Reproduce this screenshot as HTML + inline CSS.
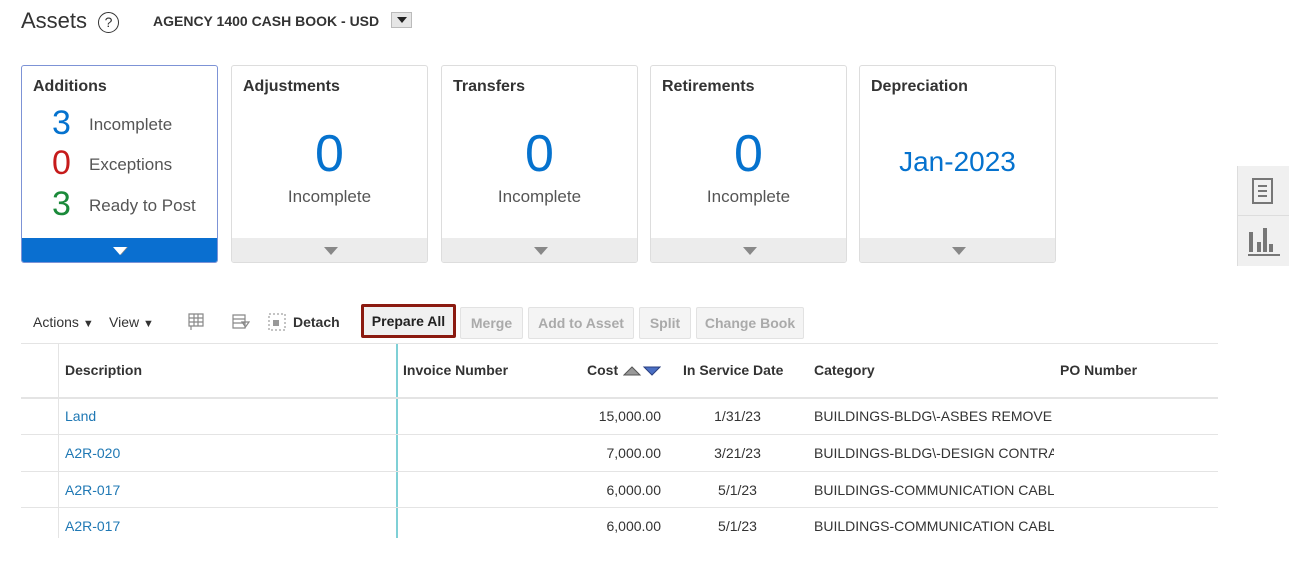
<!DOCTYPE html>
<html><head><meta charset="utf-8"><style>
*{margin:0;padding:0;box-sizing:border-box}
body{width:1289px;height:566px;background:#fff;font-family:"Liberation Sans",Arial,sans-serif;color:#333;position:relative;overflow:hidden}
.a{position:absolute;white-space:nowrap}
.card{position:absolute;top:65px;width:197px;height:198px;border:1px solid #ddd;border-radius:3px;background:#fff;overflow:hidden}
.card .t{position:absolute;left:11px;top:12px;font-size:16px;font-weight:bold;color:#333}
.card .ft{position:absolute;left:0;right:0;bottom:0;height:24px;background:#ececec}
.card .ft:after{content:"";position:absolute;left:92px;top:9px;border-left:7px solid transparent;border-right:7px solid transparent;border-top:8px solid #888}
.big{position:absolute;left:0;right:0;text-align:center;top:58px;font-size:52px;color:#0572ce;line-height:60px}
.sub{position:absolute;left:0;right:0;text-align:center;top:121px;font-size:17px;color:#555}
.btn{position:absolute;top:307px;height:32px;border:1px solid #e2e2e2;border-radius:2px;background:#f4f4f4;color:#aaa;font-size:14px;font-weight:bold;line-height:30px;text-align:center}
.hd{position:absolute;top:362px;font-size:14px;font-weight:bold;color:#333}
.line{position:absolute;left:21px;width:1197px;height:1px;background:#e4e4e4}
.c{position:absolute;font-size:14px;color:#333}
.lnk{color:#1f78b4}
</style></head><body>
<div class="a" style="left:21px;top:8px;font-size:22px;color:#333">Assets</div>
<div class="a" style="left:98px;top:12px;width:21px;height:21px;border:1.5px solid #333;border-radius:50%;font-size:14px;text-align:center;line-height:18px">?</div>
<div class="a" style="left:153px;top:13px;font-size:14px;font-weight:bold;color:#333">AGENCY 1400 CASH BOOK - USD</div>
<div class="a" style="left:391px;top:12px;width:21px;height:16px;background:#e6e6e6;border:1px solid #bbb"><div style="position:absolute;left:5px;top:4px;border-left:5px solid transparent;border-right:5px solid transparent;border-top:6px solid #222"></div></div>

<div class="card" style="left:21px;border-color:#7d93d6">
 <div class="t">Additions</div>
 <div class="a" style="left:30px;top:38px;font-size:34px;color:#0572ce">3</div><div class="a" style="left:67px;top:49px;font-size:17px;color:#555">Incomplete</div>
 <div class="a" style="left:30px;top:78px;font-size:34px;color:#c61b1b">0</div><div class="a" style="left:67px;top:89px;font-size:17px;color:#555">Exceptions</div>
 <div class="a" style="left:30px;top:119px;font-size:34px;color:#1b8a3a">3</div><div class="a" style="left:67px;top:130px;font-size:17px;color:#555">Ready to Post</div>
 <div class="ft" style="background:#0a6fd0"></div>
 <div style="position:absolute;left:91px;bottom:7px;border-left:7px solid transparent;border-right:7px solid transparent;border-top:8px solid #fff"></div>
</div>
<div class="card" style="left:231px"><div class="t">Adjustments</div><div class="big">0</div><div class="sub">Incomplete</div><div class="ft"></div></div>
<div class="card" style="left:441px"><div class="t">Transfers</div><div class="big">0</div><div class="sub">Incomplete</div><div class="ft"></div></div>
<div class="card" style="left:650px"><div class="t">Retirements</div><div class="big">0</div><div class="sub">Incomplete</div><div class="ft"></div></div>
<div class="card" style="left:859px"><div class="t">Depreciation</div><div class="big" style="font-size:28px;top:66px">Jan-2023</div><div class="ft"></div></div>

<div class="a" style="left:1237px;top:166px;width:52px;height:100px;background:#f0f0f0;border-left:1px solid #ddd">
 <div style="position:absolute;left:0;right:0;top:49px;height:1px;background:#ddd"></div>
 <svg style="position:absolute;left:13px;top:11px" width="24" height="28"><rect x="2" y="2" width="19" height="24" fill="none" stroke="#777" stroke-width="2"/><path d="M7 9h9M7 14h9M7 19h9" stroke="#777" stroke-width="2"/></svg>
 <svg style="position:absolute;left:10px;top:58px" width="32" height="32"><path d="M3 8v20M11 18v10M17 4v24M23 20v8" stroke="#777" stroke-width="4"/><path d="M0 31h32" stroke="#777" stroke-width="2"/></svg>
</div>

<div class="a" style="left:33px;top:314px;font-size:14px">Actions <span style="font-size:11px">▼</span></div>
<div class="a" style="left:109px;top:314px;font-size:14px">View <span style="font-size:11px">▼</span></div>
<svg class="a" style="left:186px;top:313px" width="18" height="18"><path d="M3 1h14v12H3zM3 5h14M3 9h14M8 1v12M12 1v12M5 13v4" stroke="#888" fill="none" stroke-width="1.2"/></svg>
<svg class="a" style="left:232px;top:313px" width="18" height="18"><path d="M1 2h12v13H1zM1 6h12M1 10h12M10 9h7l-3.5 5z" stroke="#888" fill="#fff" stroke-width="1.2"/></svg>
<svg class="a" style="left:268px;top:313px" width="18" height="18"><rect x="1" y="1" width="16" height="16" fill="none" stroke="#888" stroke-dasharray="2 2"/><rect x="5" y="7" width="6" height="6" fill="#999"/></svg>
<div class="a" style="left:293px;top:314px;font-size:14px;font-weight:bold">Detach</div>
<div class="a" style="left:361px;top:304px;width:95px;height:34px;border:3px solid #8b1a10;border-radius:2px;background:#f0f0f0;font-size:14px;font-weight:bold;color:#222;text-align:center;line-height:28px">Prepare All</div>
<div class="btn" style="left:460px;width:63px">Merge</div>
<div class="btn" style="left:528px;width:106px">Add to Asset</div>
<div class="btn" style="left:639px;width:52px">Split</div>
<div class="btn" style="left:696px;width:108px">Change Book</div>

<div class="line" style="top:343px"></div>
<div class="a" style="left:58px;top:344px;width:1px;height:194px;background:#e4e4e4"></div>
<div class="a" style="left:396px;top:344px;width:2px;height:194px;background:#7fd0d6"></div>
<div class="hd" style="left:65px">Description</div>
<div class="hd" style="left:403px">Invoice Number</div>
<div class="hd" style="left:587px">Cost</div>
<svg class="a" style="left:623px;top:364px" width="38" height="12"><path d="M1 11L9 3l8 8z" fill="#999" stroke="#555"/><path d="M21 3h16l-8 8z" fill="#4a6fc4" stroke="#2a3f80"/></svg>
<div class="hd" style="left:683px">In Service Date</div>
<div class="hd" style="left:814px">Category</div>
<div class="hd" style="left:1060px">PO Number</div>
<div class="line" style="top:397px;height:2px"></div>
<div class="line" style="top:434px"></div>
<div class="line" style="top:471px"></div>
<div class="line" style="top:507px"></div>

<div class="c lnk" style="left:65px;top:408px">Land</div>
<div class="c" style="left:560px;width:101px;text-align:right;top:408px">15,000.00</div>
<div class="c" style="left:680px;width:115px;text-align:center;top:408px">1/31/23</div>
<div class="c" style="left:814px;top:408px;width:240px;overflow:hidden;white-space:nowrap">BUILDINGS-BLDG\-ASBES REMOVE</div>

<div class="c lnk" style="left:65px;top:445px">A2R-020</div>
<div class="c" style="left:560px;width:101px;text-align:right;top:445px">7,000.00</div>
<div class="c" style="left:680px;width:115px;text-align:center;top:445px">3/21/23</div>
<div class="c" style="left:814px;top:445px;width:240px;overflow:hidden;white-space:nowrap">BUILDINGS-BLDG\-DESIGN CONTRACT</div>

<div class="c lnk" style="left:65px;top:482px">A2R-017</div>
<div class="c" style="left:560px;width:101px;text-align:right;top:482px">6,000.00</div>
<div class="c" style="left:680px;width:115px;text-align:center;top:482px">5/1/23</div>
<div class="c" style="left:814px;top:482px;width:240px;overflow:hidden;white-space:nowrap">BUILDINGS-COMMUNICATION CABLE</div>

<div class="c lnk" style="left:65px;top:518px">A2R-017</div>
<div class="c" style="left:560px;width:101px;text-align:right;top:518px">6,000.00</div>
<div class="c" style="left:680px;width:115px;text-align:center;top:518px">5/1/23</div>
<div class="c" style="left:814px;top:518px;width:240px;overflow:hidden;white-space:nowrap">BUILDINGS-COMMUNICATION CABLE</div>
</body></html>
